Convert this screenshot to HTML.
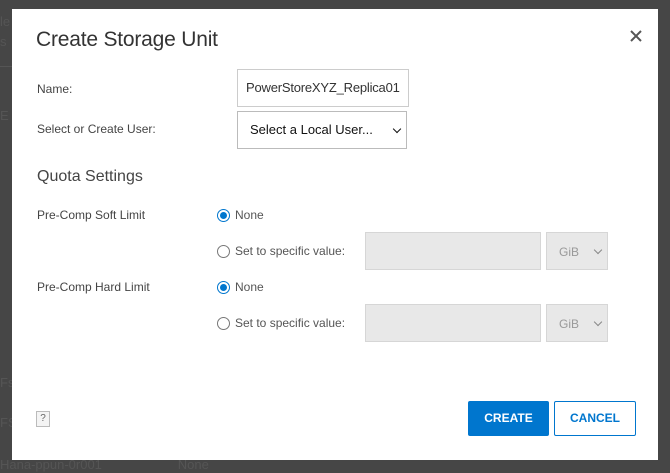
<!DOCTYPE html>
<html><head><style>
body{margin:0;width:670px;height:473px;background:#464646;font-family:"Liberation Sans",sans-serif;position:relative;overflow:hidden}
.a{position:absolute}
.bg{color:#555;font-size:13px}
.dlg{position:absolute;left:12px;top:9px;width:646px;height:451px;background:#fff}
.lbl{position:absolute;font-size:12px;color:#444}
.rad{position:absolute;width:11px;height:11px;border:1px solid #777;border-radius:50%;background:#fff}
.rad.on{border-color:#0076ce}
.rad.on::after{content:"";position:absolute;left:2px;top:2px;width:7px;height:7px;border-radius:50%;background:#0076ce}
.dis{position:absolute;background:#e8e8e8;border:1px solid #d6d6d6}
.chev{position:absolute;width:5px;height:5px;border-right:1.5px solid #888;border-bottom:1.5px solid #888;transform:rotate(45deg)}
</style></head><body>
<div class="a bg" style="left:0;top:14px">le</div>
<div class="a bg" style="left:0;top:34px">s</div>
<div class="a" style="left:0;top:66px;width:12px;height:1px;background:#555"></div>
<div class="a bg" style="left:0;top:108px">E</div>
<div class="a bg" style="left:0;top:375px">Fs</div>
<div class="a bg" style="left:0;top:415px">FS</div>
<div class="a bg" style="left:0;top:457px">Hana-ppun-0r001 &nbsp;&nbsp;&nbsp;&nbsp;&nbsp;&nbsp;&nbsp;&nbsp;&nbsp;&nbsp;&nbsp;&nbsp;&nbsp;&nbsp;&nbsp;&nbsp;&nbsp;&nbsp;&nbsp;&nbsp;None</div>
<div class="dlg"></div>
<div class="a" style="left:36px;top:28px;font-size:21px;color:#333;font-weight:300;letter-spacing:-0.2px">Create Storage Unit</div>
<svg class="a" style="left:630px;top:30px" width="12" height="12"><path d="M1 1L11 11M11 1L1 11" stroke="#555" stroke-width="2"/></svg>
<div class="lbl" style="left:37px;top:82px">Name:</div>
<div class="a" style="left:237px;top:69px;width:170px;height:36px;border:1px solid #ccc;font-size:13px;color:#333;line-height:36px;text-indent:8px;letter-spacing:-0.2px">PowerStoreXYZ_Replica01</div>
<div class="lbl" style="left:37px;top:122px">Select or Create User:</div>
<div class="a" style="left:237px;top:111px;width:168px;height:36px;border:1px solid #bbb;font-size:13px;color:#111;line-height:36px;text-indent:12px">Select a Local User...</div>
<div class="chev" style="left:394px;top:126px;border-color:#111"></div>
<div class="a" style="left:37px;top:168px;font-size:16px;color:#444;font-weight:300">Quota Settings</div>
<div class="lbl" style="left:37px;top:208px">Pre-Comp Soft Limit</div>
<div class="lbl" style="left:37px;top:280px">Pre-Comp Hard Limit</div>
<div class="rad on" style="left:217px;top:209px"></div>
<div class="lbl" style="left:235px;top:208px;color:#555">None</div>
<div class="rad" style="left:217px;top:245px"></div>
<div class="lbl" style="left:235px;top:244px;color:#555">Set to specific value:</div>
<div class="dis" style="left:365px;top:232px;width:174px;height:36px"></div>
<div class="dis" style="left:546px;top:232px;width:60px;height:36px"></div>
<div class="lbl" style="left:559px;top:245px;color:#999">GiB</div>
<div class="chev" style="left:595px;top:247px"></div>
<div class="rad on" style="left:217px;top:281px"></div>
<div class="lbl" style="left:235px;top:280px;color:#555">None</div>
<div class="rad" style="left:217px;top:317px"></div>
<div class="lbl" style="left:235px;top:316px;color:#555">Set to specific value:</div>
<div class="dis" style="left:365px;top:304px;width:174px;height:36px"></div>
<div class="dis" style="left:546px;top:304px;width:60px;height:36px"></div>
<div class="lbl" style="left:559px;top:317px;color:#999">GiB</div>
<div class="chev" style="left:595px;top:319px"></div>
<div class="a" style="left:36px;top:411px;width:12px;height:14px;border:1px solid #bbb;background:#f4f4f4;font-size:10px;color:#666;text-align:center;line-height:14px">?</div>
<div class="a" style="left:468px;top:401px;width:81px;height:35px;background:#0076ce;border-radius:2px;color:#fff;font-size:12px;font-weight:bold;text-align:center;line-height:35px">CREATE</div>
<div class="a" style="left:554px;top:401px;width:80px;height:33px;border:1px solid #0076ce;border-radius:2px;color:#0076ce;font-size:12px;font-weight:bold;text-align:center;line-height:33px">CANCEL</div>
</body></html>
